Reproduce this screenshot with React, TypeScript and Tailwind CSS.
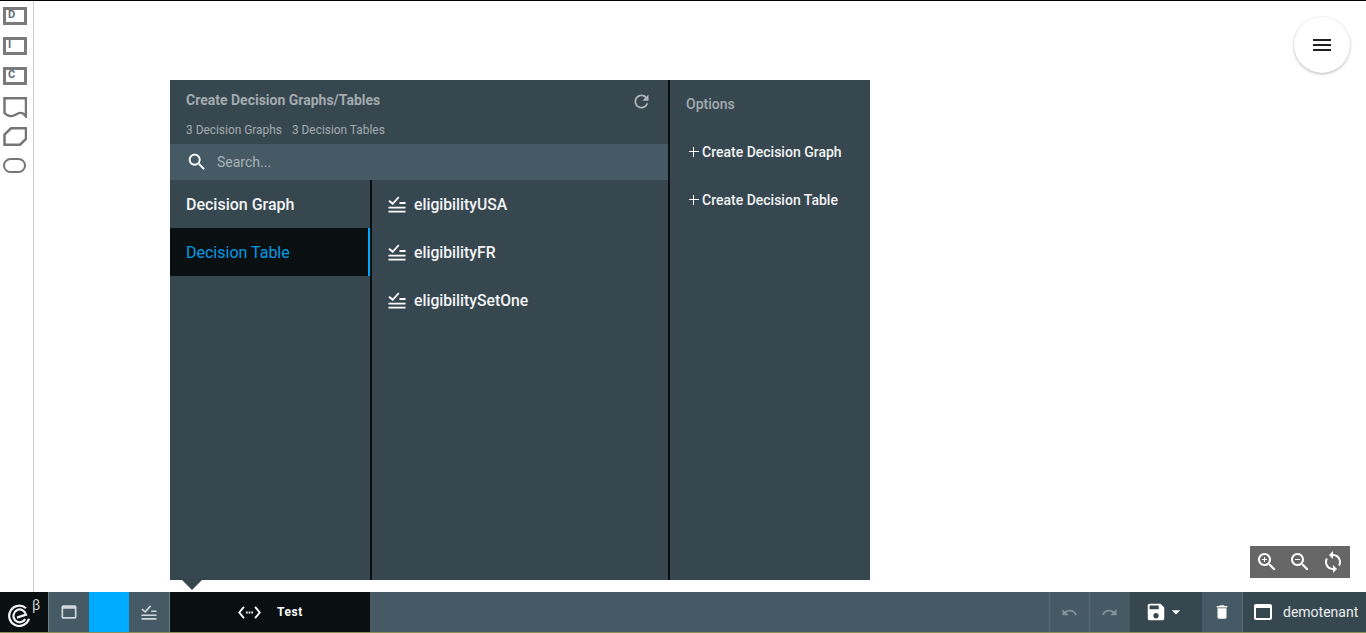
import type { ReactNode } from "react";

const SEARCH =
  "M15.5 14h-.79l-.28-.27C15.41 12.59 16 11.11 16 9.5 16 5.91 13.09 3 9.5 3S3 5.91 3 9.5 5.91 16 9.5 16c1.61 0 3.09-.59 4.23-1.57l.27.28v.79l5 4.99L20.49 19l-4.99-5zm-6 0C7.01 14 5 11.99 5 9.5S7.01 5 9.5 5 14 7.01 14 9.5 11.99 14 9.5 14z";

function Icon({ d, className }: { d: string; className: string }) {
  return (
    <svg viewBox="0 0 24 24" fill="currentColor" className={className}>
      <path d={d} />
    </svg>
  );
}

function TableIcon({ className }: { className: string }) {
  return (
    <svg viewBox="0 0 18 17" fill="none" stroke="currentColor" className={className}>
      <path d="M1 4.7 L4.7 7.8 L10.8 1" strokeWidth="1.8" />
      <path d="M11.5 7 H17.5 M0.5 11.7 H17.5 M0.5 15.7 H17.5" strokeWidth="1.8" />
    </svg>
  );
}

function LetterBox({ letter }: { letter: string }) {
  return (
    <div className="w-[24px] h-[18px] border-[3px] border-[#7a7a7a] text-[11px] leading-[10px] font-bold text-[#5f6b7a] pl-[2px]">
      {letter}
    </div>
  );
}

function SideShape({ h, children }: { h: number; children: ReactNode }) {
  return (
    <svg width="24" height={h} viewBox={`0 0 24 ${h}`} fill="none" stroke="#757575" strokeWidth="2.5">
      {children}
    </svg>
  );
}

function Sidebar() {
  return (
    <div className="w-[34px] shrink-0 border-r border-[#cccccc] pl-[3px] pt-[6px] flex flex-col">
      <LetterBox letter="D" />
      <div className="mt-[12px]">
        <LetterBox letter="I" />
      </div>
      <div className="mt-[12px]">
        <LetterBox letter="C" />
      </div>
      <div className="mt-[12px]">
        <SideShape h={21}>
          <path d="M1.5 1.3 H23 V19.5 C20 15 17 15 13 17.5 C9 20 4.5 19.5 1.5 16 Z" />
        </SideShape>
      </div>
      <div className="mt-[9px]">
        <SideShape h={19}>
          <path d="M1.5 17.7 V7.5 L8 1.3 H23 V12 L17 17.7 Z" />
        </SideShape>
      </div>
      <div className="mt-[12px]">
        <div className="w-[23px] h-[15px] border-[2.5px] border-[#757575] rounded-[8px]" />
      </div>
    </div>
  );
}

function Panel() {
  const tables = ["eligibilityUSA", "eligibilityFR", "eligibilitySetOne"];
  return (
    <div className="relative w-[700px] h-[500px] bg-[#37474f] flex">
      <div className="w-[498px] flex flex-col">
        <div className="h-[64px] px-4 pt-[12px] relative">
          <p className="text-[14px] leading-[17px] font-bold text-[#a3abaf]">Create Decision Graphs/Tables</p>
          <p className="mt-[14px] text-[11.9px] leading-[15px] text-[#a3abaf] flex gap-[10px]">
            <span>3 Decision Graphs</span>
            <span>3 Decision Tables</span>
          </p>
          <div className="absolute top-[11px] right-[16px] text-[#b0b6b9]">
            <Icon
              className="w-[21px] h-[21px]"
              d="M17.65 6.35C16.2 4.9 14.21 4 12 4c-4.42 0-7.99 3.58-7.99 8s3.57 8 7.99 8c3.73 0 6.84-2.55 7.73-6h-2.08c-.82 2.33-3.04 4-5.65 4-3.31 0-6-2.69-6-6s2.69-6 6-6c1.66 0 3.14.69 4.22 1.78L13 11h7V4l-2.35 2.35z"
            />
          </div>
        </div>
        <div className="h-[36px] bg-[#455a64] flex items-center pl-[16px]">
          <Icon className="w-[22px] h-[22px] text-white" d={SEARCH} />
          <span className="ml-[9px] text-[14px] text-[#a9b3b8]">Search...</span>
        </div>
        <div className="flex-1 flex">
          <div className="w-[200px] border-r-2 border-[#0b0f12] box-content">
            <div className="h-[48px] pl-4 pt-[2px] flex items-center text-[16px] font-medium text-[#f2f4f5]">Decision Graph</div>
            <div className="h-[48px] pl-4 pt-[2px] flex items-center text-[16px] text-[#039be5] bg-[#0a0f12] border-r-2 border-[#03a9f4]">
              Decision Table
            </div>
          </div>
          <div className="flex-1">
            {tables.map((name) => (
              <div key={name} className="h-[48px] pl-[16px] flex items-center gap-[8px] text-[15.7px] font-medium text-[#f2f4f5]">
                <TableIcon className="w-[18px] h-[17px] text-white" />
                <span className="pt-[1px]">{name}</span>
              </div>
            ))}
          </div>
        </div>
      </div>
      <div className="w-[202px] border-l-2 border-[#0b0f12]">
        <p className="pl-[16px] pt-[16px] text-[14px] leading-[17px] font-medium text-[#a3abaf]">Options</p>
        <div className="mt-[15px]">
          {["Create Decision Graph", "Create Decision Table"].map((label) => (
            <div key={label} className="h-[48px] pl-[19px] flex items-center gap-[3px] text-[14px] font-medium text-[#f2f4f5]">
              <span className="relative w-[10px] h-[10px] shrink-0">
                <span className="absolute left-0 top-[4px] w-[10px] h-px bg-white" />
                <span className="absolute left-[4px] top-0 w-px h-[10px] bg-white" />
              </span>
              {label}
            </div>
          ))}
        </div>
      </div>
      <div className="absolute left-[12px] top-full w-0 h-0 border-x-[10px] border-x-transparent border-t-[10px] border-t-[#37474f]" />
    </div>
  );
}

function BottomBar() {
  return (
    <div className="h-[40px] shrink-0 flex bg-[#455a64] text-white">
      <div className="w-[48px] bg-[#0a0f12] relative">
        <svg viewBox="0 0 32 32" fill="none" stroke="#f2f2f2" strokeWidth="3" className="absolute left-[8px] top-[11px] w-[24px] h-[24px]">
          <path d="M24 7 A13.5 13.5 0 1 0 28 21" />
          <path d="M12 19.5 L24 15.5 A8.5 8.5 0 1 0 23 21.5" />
        </svg>
        <span className="absolute left-[32px] top-[5px] text-[14px] leading-[16px] text-[#cfcfcf]">β</span>
      </div>
      <div className="w-[41px] border-l border-[#6b7d86] flex items-center justify-center">
        <Icon
          className="w-[20px] h-[20px] text-[#cfd8dc]"
          d="M19 4H5c-1.11 0-2 .9-2 2v12c0 1.1.89 2 2 2h14c1.1 0 2-.9 2-2V6c0-1.1-.89-2-2-2zm0 14H5V8h14v10z"
        />
      </div>
      <div className="w-[40px] bg-[#00aaff]" />
      <div className="w-[41px] flex items-center justify-center border-r border-[#6b7d86]">
        <TableIcon className="w-[16px] h-[15px] text-[#cfd8dc]" />
      </div>
      <div className="w-[200px] bg-[#0a0f12] flex items-center pl-[68px]">
        <svg viewBox="0 0 24 14" fill="none" stroke="white" strokeWidth="2" className="w-[23px] h-[13px]">
          <path d="M6 1 L1 7 L6 13 M18 1 L23 7 L18 13" />
          <path d="M8.2 7 H10 M11.1 7 H12.9 M14 7 H15.8" />
        </svg>
        <span className="ml-[16px] text-[12px] font-bold tracking-[0.6px]">Test</span>
      </div>
      <div className="flex-1" />
      <div className="w-[40px] border-l border-[#5d707a] flex items-center justify-center text-[#84929a]">
        <Icon
          className="w-[17px] h-[17px]"
          d="M12.5 8c-2.65 0-5.05.99-6.9 2.6L2 7v9h9l-3.62-3.62c1.39-1.16 3.16-1.88 5.12-1.88 3.54 0 6.55 2.31 7.6 5.5l2.37-.78C21.08 11.03 17.15 8 12.5 8z"
        />
      </div>
      <div className="w-[41px] border-l border-[#5d707a] pr-[1px] flex items-center justify-center text-[#84929a]">
        <Icon
          className="w-[17px] h-[17px]"
          d="M18.4 10.6C16.55 8.99 14.15 8 11.5 8c-4.65 0-8.58 3.03-9.96 7.22L3.9 16c1.05-3.19 4.05-5.5 7.6-5.5 1.95 0 3.73.72 5.12 1.88L13 16h9V7l-3.6 3.6z"
        />
      </div>
      <div className="w-[72px] bg-[#37474f] flex items-center pl-[15px]">
        <Icon
          className="w-[22px] h-[22px]"
          d="M17 3H5c-1.11 0-2 .9-2 2v14c0 1.1.89 2 2 2h14c1.1 0 2-.9 2-2V7l-4-4zm-5 16c-1.66 0-3-1.34-3-3s1.34-3 3-3 3 1.34 3 3-1.34 3-3 3zm3-10H5V5h10v4z"
        />
        <Icon className="w-[20px] h-[20px] -ml-[1px]" d="M7 10l5 5 5-5z" />
      </div>
      <div className="w-[40px] flex items-center justify-center">
        <Icon
          className="w-[18px] h-[18px]"
          d="M6 19c0 1.1.9 2 2 2h8c1.1 0 2-.9 2-2V7H6v12zM19 4h-3.5l-1-1h-5l-1 1H5v2h14V4z"
        />
      </div>
      <div className="w-[124px] bg-[#37474f] border-l border-[#5d707a] flex items-center pl-[8px]">
        <Icon
          className="w-[24px] h-[24px]"
          d="M19 4H5c-1.11 0-2 .9-2 2v12c0 1.1.89 2 2 2h14c1.1 0 2-.9 2-2V6c0-1.1-.89-2-2-2zm0 14H5V8h14v10z"
        />
        <span className="ml-[8px] text-[14px] text-[#eceff1]">demotenant</span>
      </div>
    </div>
  );
}

export default function App() {
  return (
    <div className="w-[1366px] h-[633px] flex flex-col overflow-hidden bg-white font-[family-name:Roboto]">
      <div className="h-px bg-black shrink-0" />
      <div className="flex-1 flex relative min-h-0">
        <Sidebar />
        <div className="flex-1 pl-[136px] pt-[79px]">
          <Panel />
        </div>
        <button className="absolute left-[1294px] top-[16px] w-[56px] h-[56px] rounded-full bg-white shadow-[0_1px_3px_rgba(0,0,0,0.3)] flex flex-col items-center justify-center gap-[3px]">
          <span className="w-[18px] h-[2px] bg-[#212121]" />
          <span className="w-[18px] h-[2px] bg-[#212121]" />
          <span className="w-[18px] h-[2px] bg-[#212121]" />
        </button>
        <div className="absolute left-[1250px] top-[545px] w-[100px] h-[32px] bg-[#666666] text-white flex items-center pl-[5px] gap-[9px]">
          <svg viewBox="0 0 24 24" fill="currentColor" className="w-[24px] h-[24px]">
            <path d={SEARCH} />
            <path d="M12 10h-2v2H9v-2H7V9h2V7h1v2h2v1z" />
          </svg>
          <svg viewBox="0 0 24 24" fill="currentColor" className="w-[24px] h-[24px]">
            <path d={SEARCH} />
            <path d="M7 9h5v1H7z" />
          </svg>
          <Icon
            className="w-[24px] h-[24px]"
            d="M12 4V1L8 5l4 4V6c3.31 0 6 2.69 6 6 0 1.01-.25 1.97-.7 2.8l1.46 1.46C19.54 15.03 20 13.57 20 12c0-4.42-3.58-8-8-8zm0 14c-3.31 0-6-2.69-6-6 0-1.01.25-1.97.7-2.8L5.24 7.74C4.46 8.97 4 10.43 4 12c0 4.42 3.58 8 8 8v3l4-4-4-4v3z"
          />
        </div>
      </div>
      <BottomBar />
      <div className="h-px bg-[#8a9055] shrink-0" />
    </div>
  );
}
